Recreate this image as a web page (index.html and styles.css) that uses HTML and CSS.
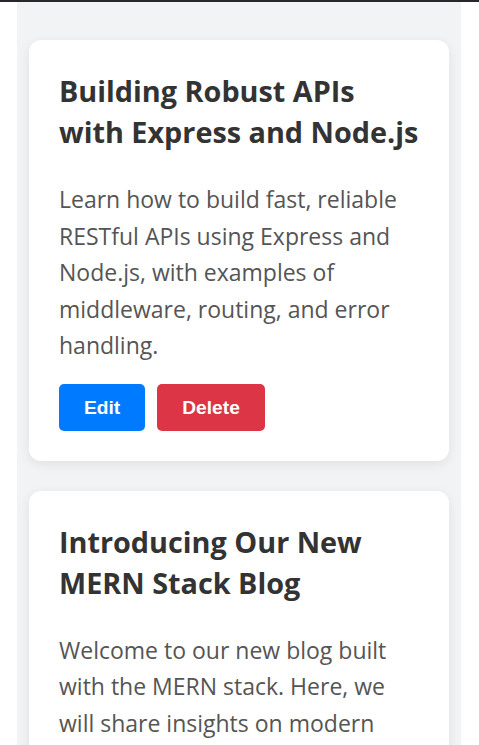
FILE: index.html
```html
<!DOCTYPE html>
<html lang="en">
<head>
<meta charset="utf-8">
<title>Blog</title>
<link rel="stylesheet" href="styles.css">
</head>
<body>
<div class="topbar"></div>
<main class="feed">
  <article class="card">
    <h2 class="card-title">Building Robust APIs with Express and Node.js</h2>
    <p class="card-text">Learn how to build fast, reliable RESTful APIs using Express and Node.js, with examples of middleware, routing, and error handling.</p>
    <div class="actions">
      <button class="btn btn-edit">Edit</button>
      <button class="btn btn-delete">Delete</button>
    </div>
  </article>
  <article class="card">
    <h2 class="card-title">Introducing Our New MERN Stack Blog</h2>
    <p class="card-text">Welcome to our new blog built with the MERN stack. Here, we will share insights on modern web development, tips, and tutorials.</p>
    <div class="actions">
      <button class="btn btn-edit">Edit</button>
      <button class="btn btn-delete">Delete</button>
    </div>
  </article>
</main>
</body>
</html>
```
FILE: styles.css
```css
* { box-sizing: border-box; }
html, body { margin: 0; padding: 0; background: #ffffff; }
body {
  font-family: "Open Sans", "Noto Sans", sans-serif;
  overflow: hidden;
}
.topbar {
  height: 2px;
  background: #26282b;
}
.feed {
  margin: 0 18px 0 17px;
  background: #f2f3f5;
  padding: 38px 12px 40px;
  display: flex;
  flex-direction: column;
  gap: 30px;
}
.card {
  background: #ffffff;
  border-radius: 12px;
  box-shadow: 0 3px 12px rgba(0, 0, 0, 0.08);
  padding: 30px;
}
.card-title {
  margin: 0 0 29px;
  font-size: 28.8px;
  line-height: 41px;
  font-weight: 700;
  color: #333333;
}
.card-text {
  margin: 0 0 20px;
  font-size: 23px;
  line-height: 36.5px;
  color: #555555;
}
.actions {
  display: flex;
  gap: 12px;
}
.btn {
  font-family: "Liberation Sans", Arial, sans-serif;
  font-weight: 700;
  font-size: 19.2px;
  line-height: 23px;
  padding: 12px 25px;
  border: none;
  border-radius: 5px;
  color: #ffffff;
}
.btn-edit { background: #007bff; }
.btn-delete { background: #dc3545; }
```
